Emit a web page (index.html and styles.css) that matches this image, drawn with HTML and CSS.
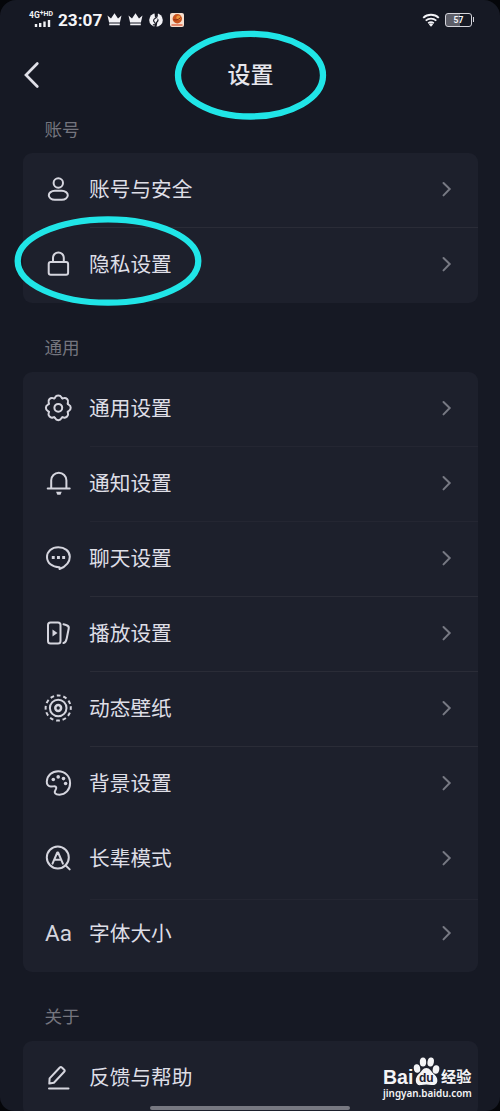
FILE: index.html
```html
<!DOCTYPE html>
<html lang="zh-CN">
<head>
<meta charset="utf-8">
<title>设置</title>
<link rel="stylesheet" href="styles.css">
</head>
<body>
<svg class="defs" width="0" height="0">
  <symbol id="chevron" viewBox="0 0 12 18"><path d="M2.500 3l6.200 6-6.200 6.400"/></symbol>
  <symbol id="crown" viewBox="0 0 15 13"><path d="M.5 2.600l3.500 3L7.500.3l3.500 5.300 3.500-3-1.600 6.800H2.100zM2.200 10.500h10.600v1.700H2.200z"/></symbol>
  <path id="tooth" d="M9.500-3.940C10.100-2.500 12.400-3.500 12.400 0S10.100 2.500 9.500 3.940"/>
</svg>
<div class="screen">
  <header class="status">
    <div class="network">
      <span class="net-label">4G<sup>+</sup><span class="hd">HD</span></span>
      <svg class="bars" width="18" height="9" viewBox="0 0 18 9"><path d="M2 5v3M6.200 4v4M10.500 2.500V8M15 1v7"/></svg>
    </div>
    <span class="clock">23:07</span>
    <svg class="crown" width="15" height="13"><use href="#crown"/></svg>
    <svg class="crown" width="15" height="13"><use href="#crown"/></svg>
    <svg class="globe" width="14" height="14" viewBox="0 0 14 14"><circle cx="7" cy="7" r="6.800" fill="#f2f2f6"/><path d="M5.200-.5h3.600C7.300 1.500 9 2.800 7.700 4.300 6.500 5.600 4 5.500 4.700 8c.3 1.200 2 1.500 1.500 3.300-.4 1-1.500.7-2.200.2" fill="none" stroke="#171923" stroke-width="1.100"/><path d="M5.500 0h2.800v3L6 5zM8.500 5c1.600 1.500 1.500 3-.2 4.500L7.500 14H5.200l1.400-4C7.500 8.500 9 7 8.500 5z" fill="#171923"/></svg>
    <svg class="app" width="14" height="14" viewBox="0 0 14 14"><rect width="14" height="14" rx="2" fill="#f7dfce"/><circle cx="7.300" cy="5.800" r="4.700" fill="#c9531e"/><circle cx="8.500" cy="4.800" r="2.200" fill="#ef963d"/><path d="M3.500 6.500c2 1 5 .5 7-2" stroke="#8c2b12" fill="none"/><path d="M1.500 12h11" stroke="#e06a4a" stroke-width="1.600"/></svg>
    <svg class="wifi" width="18" height="14" viewBox="0 0 18 14"><path d="M1.200 4.800a11.500 11.500 0 0 1 15.600 0M3.700 7.700a8 8 0 0 1 10.600 0M6.200 10.300a4.400 4.400 0 0 1 5.600 0"/><path class="wifi-dot" d="M6.900 11.400a3 3 0 0 1 4.200 0L9 13.700z"/></svg>
    <div class="battery"><span>57</span></div>
  </header>

  <nav class="titlebar">
    <svg class="back" width="18" height="28" viewBox="0 0 18 28"><path d="M14.300 2.500L3 14l11.300 11.500"/></svg>
    <h1 class="title">设置</h1>
  </nav>

  <h2 class="section first">账号</h2>
  <section class="card">
    <div class="row">
      <svg class="icon" viewBox="0 0 28 28"><circle cx="14.300" cy="8" r="4.700"/><rect x="4.800" y="15.800" width="19" height="9" rx="6" ry="4.500"/></svg>
      <span class="label">账号与安全</span><svg class="go" width="12" height="18"><use href="#chevron"/></svg>
    </div>
    <div class="row">
      <svg class="icon" viewBox="0 0 28 28"><rect x="4.700" y="12" width="19.400" height="12.700" rx="2"/><path d="M9 12V7.800a5.400 5.400 0 0 1 10.800 0V12"/></svg>
      <span class="label">隐私设置</span><svg class="go" width="12" height="18"><use href="#chevron"/></svg>
    </div>
  </section>

  <h2 class="section">通用</h2>
  <section class="card">
    <div class="row">
      <svg class="icon" viewBox="0 0 28 28"><g transform="translate(14.300 13.800)"><use href="#tooth"/><use href="#tooth" transform="rotate(45)"/><use href="#tooth" transform="rotate(90)"/><use href="#tooth" transform="rotate(135)"/><use href="#tooth" transform="rotate(180)"/><use href="#tooth" transform="rotate(225)"/><use href="#tooth" transform="rotate(270)"/><use href="#tooth" transform="rotate(315)"/><circle r="3.900"/></g></svg>
      <span class="label">通用设置</span><svg class="go" width="12" height="18"><use href="#chevron"/></svg>
    </div>
    <div class="row faint">
      <svg class="icon" viewBox="0 0 28 28"><path d="M3.700 19.500h22M7.200 19V11.300a7.600 7.600 0 0 1 15.200 0V19"/><path class="solid" d="M12.100 22.700h5.600l-1.200 3h-3.200z"/></svg>
      <span class="label">通知设置</span><svg class="go" width="12" height="18"><use href="#chevron"/></svg>
    </div>
    <div class="row faint">
      <svg class="icon" viewBox="0 0 28 28"><path d="M15.500 25v-1.800C8 23.300 3 18.800 3 13 3 7.200 7.900 3.200 14.300 3.200s11.500 4 11.500 9.500c0 5.300-4.300 9.900-10.300 12.300z"/><path class="solid" d="M7.800 12h2.900v2.900H7.800zM13 12h2.900v2.900H13zM18.200 12h2.900v2.900h-2.900z"/></svg>
      <span class="label">聊天设置</span><svg class="go" width="12" height="18"><use href="#chevron"/></svg>
    </div>
    <div class="row">
      <svg class="icon" viewBox="0 0 28 28"><rect x="4" y="3.500" width="12.500" height="21" rx="2.500"/><path class="solid" d="M8.500 10.500l5 3.500-5 3.500z"/><path d="M19.500 5.300l2.500.7c2.500.7 3.200 1.500 2.700 3.500l-2 10c-.5 2.500-1.400 4.200-3.200 4.500"/></svg>
      <span class="label">播放设置</span><svg class="go" width="12" height="18"><use href="#chevron"/></svg>
    </div>
    <div class="row">
      <svg class="icon" viewBox="0 0 28 28"><circle cx="14.200" cy="14" r="12.600" stroke-dasharray="3.700 2.897" transform="rotate(-8 14.200 14)"/><circle cx="14.200" cy="14" r="8.300"/><circle cx="14.200" cy="14" r="2.900" stroke-width="2.500"/></svg>
      <span class="label">动态壁纸</span><svg class="go" width="12" height="18"><use href="#chevron"/></svg>
    </div>
    <div class="row">
      <svg class="icon" viewBox="0 0 28 28"><path d="M2.800 12.500C3.300 6.300 8 2.300 14.200 2.300c6.900 0 11.900 5 11.900 11.600 0 7-4.800 11.800-10.600 11.800-4.500 0-5.700-2-4.200-4.300 1.600-2.200 1.300-4.500-1.500-4.200l-2.600.2c-2.900.2-4.600-1.800-4.400-4.900z"/><circle class="solid" cx="9.300" cy="10.500" r="1.800"/><circle class="solid" cx="14.200" cy="7.900" r="1.800"/><circle class="solid" cx="19.500" cy="9.600" r="1.800"/><circle class="solid" cx="21.600" cy="14.500" r="1.800"/></svg>
      <span class="label">背景设置</span><svg class="go" width="12" height="18"><use href="#chevron"/></svg>
    </div>
    <div class="row plain">
      <svg class="icon" viewBox="0 0 28 28"><circle cx="13.800" cy="13.500" r="11"/><path d="M21.500 21.200l4.200 4.200M8.500 19.700l4.800-11.200h.8l4.800 11.200M10.300 15.800h7"/></svg>
      <span class="label">长辈模式</span><svg class="go" width="12" height="18"><use href="#chevron"/></svg>
    </div>
    <div class="row faint low">
      <span class="icon glyph">Aa</span>
      <span class="label">字体大小</span><svg class="go" width="12" height="18"><use href="#chevron"/></svg>
    </div>
  </section>

  <h2 class="section">关于</h2>
  <section class="card">
    <div class="row">
      <svg class="icon" viewBox="0 0 28 28"><path d="M5 25.500h19.500M5.300 20.500l.3-5.100L15.800 4.500c.7-.7 1.400-.7 2.100 0l2.300 2.200c.7.700.7 1.400 0 2.100L9.900 19.700z"/></svg>
      <span class="label">反馈与帮助</span>
    </div>
  </section>

  <svg class="marks" width="500" height="320" viewBox="0 0 500 320"><ellipse cx="250.500" cy="75.200" rx="72.500" ry="41.300"/><ellipse cx="108" cy="261" rx="90.300" ry="41.700"/></svg>
  <div class="watermark">
    <div class="brand">
      <span class="bai">Bai</span>
      <span class="paw">
        <svg width="27" height="29" viewBox="0 0 27 29"><ellipse cx="4" cy="11.500" rx="3.200" ry="4.300" transform="rotate(-10 4 11.500)"/><ellipse cx="10" cy="5" rx="3.200" ry="4.500"/><ellipse cx="17.700" cy="5" rx="3.200" ry="4.500" transform="rotate(10 17.700 5)"/><ellipse cx="23" cy="12.500" rx="3.300" ry="4.200" transform="rotate(10 23 12.500)"/><path d="M13.300 11c3.500 0 5 3.500 7 5.500 2.500 2.200 4.500 4.500 4 8-.5 3-3.300 4-6 3.500-3.500-.7-6.500-.7-10 0-3 .6-5.300-.7-5.500-4-.2-3 1.200-5.500 3.500-7.500 2.300-2 3.500-5.500 7-5.500z"/></svg>
        <span class="du">du</span>
      </span>
      <span class="jy">经验</span>
    </div>
    <div class="site">jingyan.baidu.com</div>
  </div>
  <div class="homebar"></div>
</div>
</body>
</html>
```
FILE: styles.css
```css
* { box-sizing: border-box; }
body { margin: 0; background: #05060a; font-family: "Liberation Sans", "Noto Sans CJK SC", sans-serif; }
.defs { position: absolute; }
.screen {
  position: relative; width: 500px; height: 1111px; overflow: hidden;
  background: #161924; border-radius: 16px 16px 14px 14px; color: #dedee6;
}
.status { display: flex; height: 39px; align-items: center; padding: 0 28px 0 29px; }
.network { display: flex; flex-direction: column; width: 26px; height: 17px; margin-right: 3px; }
.net-label { display: flex; font: bold 8.5px/8px Roboto, sans-serif; white-space: nowrap; color: #f2f2f6; }
.net-label sup { font-size: 7px; line-height: 5px; }
.hd { font-size: 7px; line-height: 6px; }
.bars { margin-left: 5px; fill: none; stroke: #f2f2f6; stroke-width: 2.4; }
.clock { width: 44px; font: 700 17.2px/20px Roboto, sans-serif; color: #f5f5f8; white-space: nowrap; }
.crown { margin-left: 4.5px; margin-right: 1.5px; fill: #f2f2f6; }
.globe { margin-left: 5px; }
.app { margin-left: 7px; }
.wifi { margin-left: auto; fill: none; stroke: #f2f2f6; stroke-width: 1.8; }
.wifi .wifi-dot { fill: #f2f2f6; stroke: none; }
.battery {
  position: relative; display: flex; align-items: center; justify-content: center;
  width: 27px; height: 14px; margin-left: 5px; border: 1.5px solid #d4d4db; border-radius: 3px;
  background: linear-gradient(90deg, #5d5e68 55%, transparent 55%);
  font: 700 8.5px/10px Roboto, sans-serif; color: #f5f5f8;
}
.battery::after { content: ""; position: absolute; right: -3px; top: 3px; width: 1.5px; height: 5px; background: #d4d4db; }
.titlebar { display: grid; grid-template-columns: 60px 1fr 60px; align-items: center; height: 72px; }
.back { margin-left: 23px; fill: none; stroke: #dfdfe7; stroke-width: 2.7; stroke-linecap: round; }
.title { margin: 0; padding-left: 1px; text-align: center; font-size: 23px; font-weight: 500; line-height: 30px; color: #e6e6ec; }
.section { height: 69px; margin: 0; padding: 32.5px 0 0 44.5px; font-size: 17.6px; font-weight: 400; line-height: 26px; color: #74757e; }
.section.first { height: 41.5px; padding-top: 6px; }
.card { width: 455px; margin-left: 23px; background: #1d202c; border-radius: 9px; }
.row { position: relative; display: flex; align-items: center; height: 75px; padding: 0 25px 1.5px 21px; }
.row + .row::before { content: ""; position: absolute; top: -1px; left: 67px; right: 0; height: 1px; background: #2a2c37; }
.row.faint::before { opacity: .6; }
.row.plain::before { opacity: 0; }
.row.low::before { top: 2px; }
.icon { width: 28px; height: 28px; flex: none; fill: none; stroke: #d5d5de; stroke-width: 2; stroke-linecap: round; stroke-linejoin: round; }
.icon circle[stroke-dasharray] { stroke-linecap: butt; }
.icon .solid { fill: #d5d5de; stroke: none; }
.glyph { font: 400 22.5px/28px Roboto, sans-serif; color: #d5d5de; padding-left: 1px; white-space: nowrap; }
.label { margin-left: 17px; padding-top: 2px; font-size: 20.7px; line-height: 30px; white-space: nowrap; }
.go { margin-left: auto; fill: none; stroke: #777983; stroke-width: 2; stroke-linecap: round; }
.marks { position: absolute; left: 0; top: 0; fill: none; stroke: #20e5e7; stroke-width: 6.3; }
.watermark { position: absolute; left: 383px; top: 1057px; width: 92px; color: #f4f4f6; }
.brand { display: flex; align-items: flex-end; height: 28px; }
.bai { width: 30px; font: 700 19.5px/16px "Liberation Sans", sans-serif; }
.paw { position: relative; width: 27px; height: 28px; fill: #f4f4f6; }
.du { position: absolute; left: 6px; top: 15px; font: 700 12px/12px "Liberation Sans", sans-serif; color: #1d202c; }
.jy { margin-left: 1px; font-size: 15.2px; font-weight: 700; line-height: 16px; white-space: nowrap; }
.site { margin-top: 1px; font: 600 9.9px/15px "Noto Sans", sans-serif; white-space: nowrap; }
.homebar { position: absolute; left: 150px; top: 1106px; width: 200px; height: 4px; border-radius: 2px; background: #777881; }
```
